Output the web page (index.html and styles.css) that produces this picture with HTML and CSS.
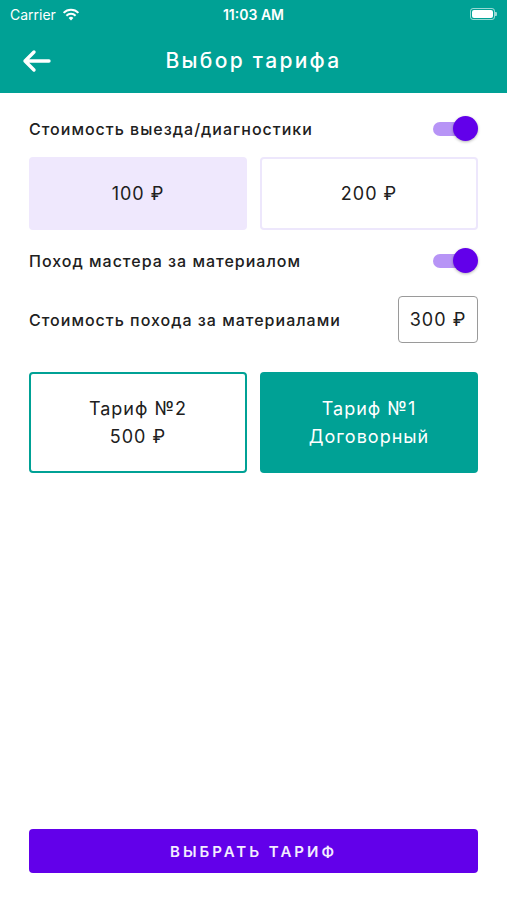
FILE: index.html
```html
<!DOCTYPE html>
<html lang="ru">
<head>
  <meta charset="UTF-8">
  <title>Выбор тарифа</title>
  <link rel="stylesheet" href="styles.css">
</head>
<body>

<header class="header">
  <div class="status-bar">
    <div class="status-left">
      <span>Carrier</span>
      <svg class="wifi" width="18" height="13" viewBox="0 0 18 13">
        <path d="M9 12.5 L6.6 9.9 A3.4 3.4 0 0 1 11.4 9.9 Z" fill="#fff"/>
        <path d="M4.4 7.7 A6.5 6.5 0 0 1 13.6 7.7" stroke="#fff" stroke-width="2" fill="none"/>
        <path d="M1.6 4.9 A10.5 10.5 0 0 1 16.4 4.9" stroke="#fff" stroke-width="2" fill="none"/>
      </svg>
    </div>
    <div class="status-time">11:03 AM</div>
    <div class="status-right">
      <div class="battery"><div class="battery-fill"></div></div>
      <div class="battery-cap"></div>
    </div>
  </div>
  <div class="toolbar">
    <svg class="back" width="30" height="24" viewBox="0 0 30 24">
      <path d="M28 12 H4 M13 3 L4 12 L13 21" stroke="#fff" stroke-width="3.4" fill="none" stroke-linecap="round" stroke-linejoin="round"/>
    </svg>
    <h1>Выбор тарифа</h1>
  </div>
</header>

<main class="content">
  <div class="row row-first">
    <span class="label">Стоимость выезда/диагностики</span>
    <div class="switch"><div class="switch-track"></div><div class="switch-knob"></div></div>
  </div>

  <div class="choice-grid">
    <div class="choice choice-active">100 ₽</div>
    <div class="choice">200 ₽</div>
  </div>

  <div class="row row-second">
    <span class="label">Поход мастера за материалом</span>
    <div class="switch"><div class="switch-track"></div><div class="switch-knob"></div></div>
  </div>

  <div class="row row-third">
    <span class="label">Стоимость похода за материалами</span>
    <div class="price-box">300 ₽</div>
  </div>

  <div class="tariff-grid">
    <div class="tariff tariff-outline">Тариф №2<br>500 ₽</div>
    <div class="tariff tariff-filled">Тариф №1<br>Договорный</div>
  </div>

  <button class="submit">ВЫБРАТЬ ТАРИФ</button>
</main>

</body>
</html>
```

FILE: styles.css
```css
:root {
  --teal: #00a195;
  --purple: #6200ea;
  --text: #202020;
}
* { margin: 0; padding: 0; box-sizing: border-box; }
body {
  font-family: Inter, "Noto Sans", sans-serif;
  background: #fff;
  color: var(--text);
  min-height: 100vh;
  display: flex;
  flex-direction: column;
}
.header { background: var(--teal); color: #fff; }
.status-bar {
  height: 28px;
  display: flex;
  align-items: center;
  justify-content: space-between;
  padding: 0 10px;
  font-size: 14px;
  position: relative;
}
.status-left { display: flex; align-items: center; gap: 6px; }
.status-time {
  position: absolute;
  left: 0;
  right: 0;
  text-align: center;
  font-weight: 600;
  pointer-events: none;
}
.status-right { display: flex; align-items: center; }
.battery {
  width: 25px;
  height: 12px;
  border: 1px solid rgba(255,255,255,0.6);
  border-radius: 3px;
  padding: 1px;
}
.battery-fill { width: 100%; height: 100%; background: #fff; border-radius: 2px; }
.battery-cap { width: 2px; height: 4px; background: rgba(255,255,255,0.6); border-radius: 0 1px 1px 0; }
.toolbar {
  height: 65px;
  display: flex;
  align-items: center;
  position: relative;
  padding-left: 21px;
}
.toolbar h1 {
  position: absolute;
  left: 0;
  right: 0;
  text-align: center;
  font-size: 21px;
  font-weight: 500;
  letter-spacing: 2.3px;
  pointer-events: none;
}
.content {
  flex: 1;
  display: flex;
  flex-direction: column;
  padding: 17px 29px 27px;
}
.row {
  display: flex;
  align-items: center;
  justify-content: space-between;
  height: 38px;
}
.label { font-size: 16px; font-weight: 500; letter-spacing: 1px; }
.switch { position: relative; width: 46px; height: 26px; }
.switch-track {
  position: absolute;
  left: 1px;
  top: 6px;
  width: 36px;
  height: 14px;
  border-radius: 7px;
  background: #b794f6;
}
.switch-knob {
  position: absolute;
  right: 0;
  top: 0;
  width: 25px;
  height: 25px;
  border-radius: 50%;
  background: var(--purple);
  box-shadow: 0 1px 3px rgba(0,0,0,0.3);
}
.choice-grid, .tariff-grid {
  display: grid;
  grid-template-columns: 1fr 1fr;
  gap: 13px;
}
.choice-grid { margin-top: 9px; }
.choice {
  height: 73px;
  display: flex;
  align-items: center;
  justify-content: center;
  font-size: 18px;
  letter-spacing: 1px;
  border: 2px solid #ede7fc;
  border-radius: 4px;
}
.choice-active { background: #efe8fd; border-color: #efe8fd; }
.row-second { margin-top: 12px; }
.row-third { margin-top: 16px; height: 47px; }
.price-box {
  width: 80px;
  height: 47px;
  display: flex;
  align-items: center;
  justify-content: center;
  font-size: 18px;
  letter-spacing: 1px;
  border: 1px solid #9a9a9a;
  border-radius: 4px;
}
.tariff-grid { margin-top: 29px; }
.tariff {
  height: 101px;
  display: flex;
  align-items: center;
  justify-content: center;
  text-align: center;
  font-size: 18px;
  line-height: 28px;
  letter-spacing: 1px;
  border-radius: 4px;
}
.tariff-outline { border: 2px solid var(--teal); }
.tariff-filled { background: var(--teal); color: #fff; }
.submit {
  margin-top: auto;
  height: 44px;
  border: none;
  border-radius: 4px;
  background: var(--purple);
  color: #f3ecff;
  font-family: inherit;
  font-size: 15px;
  font-weight: 600;
  letter-spacing: 3px;
}
```
